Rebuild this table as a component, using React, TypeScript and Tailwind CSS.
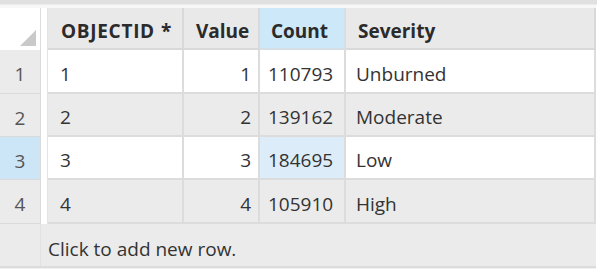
import React from "react";

const rows = [
  { n: "1", id: "1", v: "1", c: "110793", s: "Unburned", bg: "bg-white", h: "h-[44px]" },
  { n: "2", id: "2", v: "2", c: "139162", s: "Moderate", bg: "bg-[#ebebeb]", h: "h-[43px]" },
  { n: "3", id: "3", v: "3", c: "184695", s: "Low", bg: "bg-white", h: "h-[43px]", sel: true },
  { n: "4", id: "4", v: "4", c: "105910", s: "High", bg: "bg-[#ebebeb]", h: "h-[44px]" },
];

export default function App() {
  return (
    <div
      className="w-[598px] h-[278px] bg-white overflow-hidden flex flex-col text-[19px] text-[#333333]"
      style={{ fontFamily: '"Open Sans", "Noto Sans", sans-serif' }}
    >
      <div className="h-[4px] w-[597px] bg-[#e0e0e0] shrink-0" />
      <div className="h-[1px] w-[597px] bg-[#ececec] shrink-0" />
      <div className="flex h-[45px] shrink-0">
        <div className="w-[41px] h-full flex flex-col">
          <div className="h-[3px] bg-[#f7f7f7]" />
          <div className="flex-1 bg-white border-r border-[#dcdcdc] relative">
            <svg className="absolute right-[4px] bottom-[4px]" width="16" height="16" viewBox="0 0 16 16">
              <polygon points="16,0 16,16 0,16" fill="#c9c9c9" />
            </svg>
          </div>
        </div>
        <div className="w-[7px] h-full flex flex-col">
          <div className="h-[3px] bg-[#f7f7f7]" />
          <div className="flex-1 bg-white border-r border-[#e3e3e3]" />
        </div>
        <div className="flex-1 flex flex-col">
          <div className="h-[3px] bg-[#f7f7f7] w-[548px]" />
          <div className="flex flex-1 font-bold text-[#2b2b2b]">
            <div className="w-[136px] bg-[#e9e9e9] border-r-2 border-b-2 border-[#d9d9d9] pl-[13px] pt-[6px] flex items-center">
              <span className="tracking-[0.7px]">OBJECTID</span>
              <span className="ml-[6px]">*</span>
            </div>
            <div className="w-[76px] bg-[#e9e9e9] border-r-2 border-b-2 border-[#d9d9d9] pl-[12px] pt-[6px] flex items-center">Value</div>
            <div className="w-[86px] bg-[#cde8f8] border-r-2 border-b-2 border-[#d6dfe6] pl-[11px] pt-[6px] flex items-center">Count</div>
            <div className="w-[250px] bg-[#e9e9e9] border-r-2 border-b-2 border-[#d9d9d9] pl-[12px] pt-[6px] flex items-center">Severity</div>
          </div>
        </div>
      </div>
      {rows.map((r) => (
        <div key={r.n} className={`flex ${r.h} shrink-0`}>
          <div
            className={`w-[41px] h-full border-r border-b border-[#dadada] pt-[6px] flex items-center justify-center text-[#555555] ${
              r.sel ? "bg-[#cce6f7]" : "bg-[#ebebeb]"
            }`}
          >
            {r.n}
          </div>
          <div className="w-[7px] h-full bg-white border-r border-[#e3e3e3]" />
          <div className={`w-[136px] h-full ${r.bg} border-r-2 border-b-2 border-[#dcdcdc] pl-[12px] pt-[6px] flex items-center`}>{r.id}</div>
          <div className={`w-[76px] h-full ${r.bg} border-r-2 border-b-2 border-[#dcdcdc] pr-[7px] pt-[6px] flex items-center justify-end`}>{r.v}</div>
          <div
            className={`w-[86px] h-full ${r.sel ? "bg-[#dcedf9]" : r.bg} border-r-2 border-b-2 border-[#dcdcdc] pl-[8px] pt-[6px] flex items-center`}
          >
            {r.c}
          </div>
          <div className={`w-[250px] h-full ${r.bg} border-r-2 border-b-2 border-[#dcdcdc] pl-[10px] pt-[6px] flex items-center`}>{r.s}</div>
        </div>
      ))}
      <div className="flex h-[44px] w-[596px] shrink-0 bg-[#ebebeb] border-b-2 border-[#dcdcdc]">
        <div className="w-[41px] h-full border-r border-[#e2e2e2]" />
        <div className="flex items-center pl-[7px] pt-[8px]">Click to add new row.</div>
      </div>
      <div className="h-[1px] w-[596px] bg-[#f0f0f0]" />
    </div>
  );
}
